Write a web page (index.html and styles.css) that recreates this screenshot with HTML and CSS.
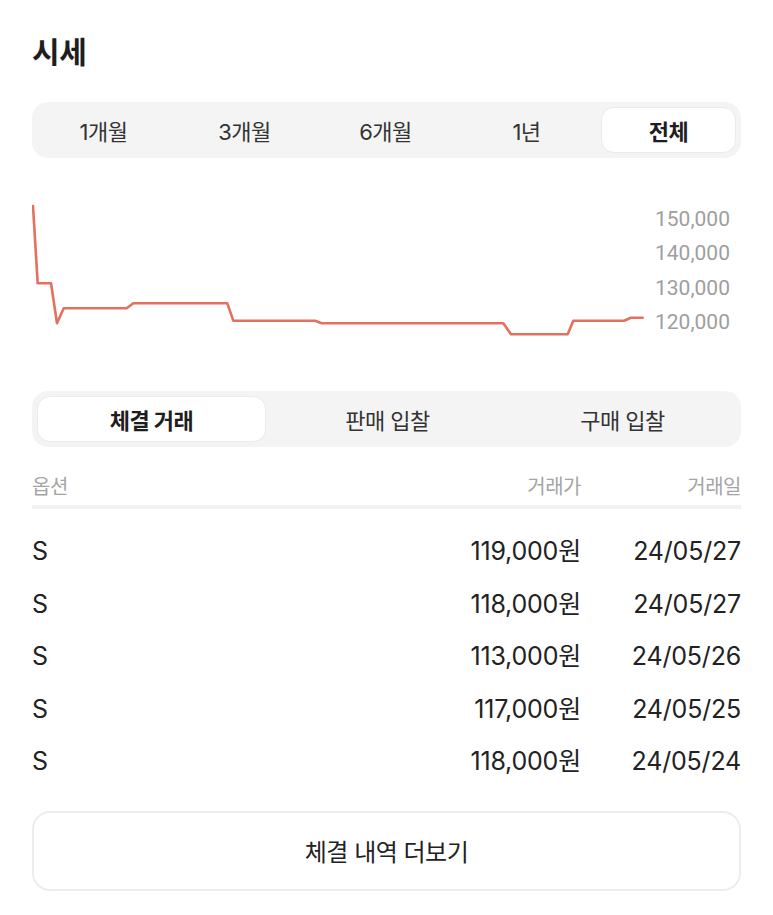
FILE: index.html
```html
<!DOCTYPE html>
<html lang="ko">
<head>
<meta charset="utf-8">
<title>시세</title>
<link rel="stylesheet" href="styles.css">
</head>
<body>
<div class="page">
  <h2 class="title">시세</h2>

  <div class="seg seg-period">
    <div class="seg-item">1개월</div>
    <div class="seg-item">3개월</div>
    <div class="seg-item">6개월</div>
    <div class="seg-item">1년</div>
    <div class="seg-item">전체</div>
  </div>

  <div class="chart">
    <svg class="chart-line" width="614" height="140" viewBox="0 0 614 140">
      <polyline fill="none" stroke="#e4705f" stroke-width="2.6" stroke-linejoin="round" stroke-linecap="round"
        points="1,6 5.7,83.3 19,83.3 25,123.3 31.7,108.3 94.7,108.3 101.3,103.3 195.3,103.3 201.3,120.7 283,120.7 289.7,123.3 471.3,123.3 479,134.3 535.7,134.3 541.3,120.7 592.3,120.7 598.7,117.7 610.7,117.7"/>
    </svg>
    <div class="axis">
      <span>150,000</span>
      <span>140,000</span>
      <span>130,000</span>
      <span>120,000</span>
    </div>
  </div>

  <div class="seg seg-type">
    <div class="seg-item">체결 거래</div>
    <div class="seg-item">판매 입찰</div>
    <div class="seg-item">구매 입찰</div>
  </div>

  <div class="table">
    <div class="row head">
      <span>옵션</span>
      <span class="r">거래가</span>
      <span class="r">거래일</span>
    </div>
    <div class="body">
      <div class="row"><span>S</span><span class="r">119,000원</span><span class="r">24/05/27</span></div>
      <div class="row"><span>S</span><span class="r">118,000원</span><span class="r">24/05/27</span></div>
      <div class="row"><span>S</span><span class="r">113,000원</span><span class="r">24/05/26</span></div>
      <div class="row"><span>S</span><span class="r">117,000원</span><span class="r">24/05/25</span></div>
      <div class="row"><span>S</span><span class="r">118,000원</span><span class="r">24/05/24</span></div>
    </div>
  </div>

  <button class="more" type="button">체결 내역 더보기</button>
</div>
</body>
</html>
```

FILE: styles.css
```css
* { box-sizing: border-box; }

html, body {
  margin: 0;
  padding: 0;
  background: #ffffff;
}

body {
  font-family: Inter, "Noto Sans CJK KR", sans-serif;
  color: #222222;
}

.page {
  padding: 28px 32px 0 32px;
  width: 773px;
}

.title {
  margin: 0;
  font-family: "Noto Sans CJK KR", sans-serif;
  font-size: 30px;
  line-height: 44px;
  font-weight: 700;
  color: #1e1e1e;
  letter-spacing: -0.3px;
}

.seg {
  display: flex;
  gap: 8px;
  padding: 5px;
  background: #f4f4f4;
  border-radius: 16px;
  height: 56px;
}

.seg-period { margin-top: 30px; }

.seg-item {
  flex: 1 1 0;
  display: flex;
  align-items: center;
  justify-content: center;
  font-size: 22px;
  color: #333333;
  border-radius: 13px;
  letter-spacing: -0.5px;
}

.seg-period .seg-item:last-child,
.seg-type .seg-item:first-child {
  background: #ffffff;
  border: 1.5px solid #ebebeb;
  font-weight: 700;
  color: #1e1e1e;
}

.chart {
  margin-top: 42px;
  display: flex;
  height: 140px;
}

.chart-line {
  display: block;
  flex: none;
}

.axis {
  margin-left: 9px;
  padding-top: 2px;
  display: flex;
  flex-direction: column;
  font-family: Roboto, sans-serif;
  font-size: 21px;
  line-height: 34.33px;
  color: #9e9e9e;
}

.seg-type { margin-top: 51px; }

.table { margin-top: 24px; }

.row {
  display: grid;
  grid-template-columns: 1fr auto 160px;
  align-items: center;
}

.row .r { text-align: right; }

.row.head {
  font-family: "Noto Sans CJK KR", sans-serif;
  font-size: 20px;
  line-height: 30px;
  color: #a5a5a5;
  padding-bottom: 4px;
  border-bottom: 4px solid #f2f2f2;
  letter-spacing: -0.5px;
}

.body { padding-top: 16px; }

.body .row {
  font-size: 25px;
  line-height: 52.5px;
  color: #222222;
  letter-spacing: -0.2px;
}

.more {
  display: block;
  width: 100%;
  margin-top: 23px;
  height: 80px;
  background: #ffffff;
  border: 2px solid #ededed;
  border-radius: 18px;
  font-family: "Noto Sans CJK KR", sans-serif;
  font-size: 24px;
  color: #222222;
  letter-spacing: -0.5px;
}
```
